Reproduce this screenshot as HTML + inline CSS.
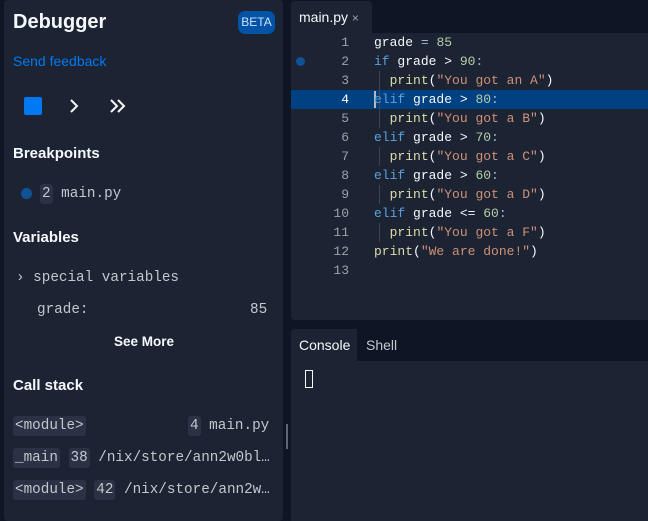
<!DOCTYPE html>
<html><head><style>
*{margin:0;padding:0;box-sizing:border-box}
body{width:648px;height:521px;background:#0e1525;position:relative;overflow:hidden;font-family:"Liberation Sans",sans-serif;color:#f5f9fc}
.a{position:absolute}
.mono{font-family:"Liberation Mono",monospace}
.h{font-weight:bold;font-size:15px}
.chip{background:#2b3245;border-radius:3px;padding:2px 2px}
.ln{position:absolute;left:291px;width:58px;text-align:right;color:#9da2a6;font-size:13px;font-family:"Liberation Mono",monospace}
.cd{position:absolute;left:374px;font-size:13px;white-space:pre;color:#f5f9fc;font-family:"Liberation Mono",monospace}
.k{color:#5ea0dc}.n{color:#b5cea8}.s{color:#ce9178}.f{color:#dcdcaa}.o{color:#a0b8d0}
</style></head><body>
<div class="a" style="left:4px;top:0;width:279px;height:521px;background:#1c2333;border-radius:4px"></div>
<div class="a" style="left:13px;top:11px;font-size:20px;font-weight:bold">Debugger</div>
<div class="a" style="left:238px;top:11px;width:37px;height:23px;background:#0053a6;border-radius:7px;font-size:12px;text-align:center;line-height:23px;color:#cfe3ff">BETA</div>
<div class="a" style="left:13px;top:53px;font-size:14px;color:#0079f2">Send feedback</div>
<div class="a" style="left:24px;top:97px;width:18px;height:18px;background:#0079f2;border-radius:2px"></div>
<svg class="a" style="left:66px;top:97px" width="60" height="18"><path d="M5 3l6 6-6 6" stroke="#f5f9fc" stroke-width="2" fill="none"/><path d="M45 3l6 6-6 6M52 3l6 6-6 6" stroke="#f5f9fc" stroke-width="2" fill="none"/></svg>
<div class="a h" style="left:13px;top:145px">Breakpoints</div>
<div class="a" style="left:21px;top:188px;width:11px;height:11px;border-radius:50%;background:#0f5296"></div>
<div class="a mono" style="left:40px;top:186px;font-size:14.3px;color:#c2c8cc"><span class="chip">2</span> main.py</div>
<div class="a h" style="left:13px;top:229px">Variables</div>
<div class="a mono" style="left:16px;top:270px;font-size:14.3px;color:#c2c8cc">›&nbsp;special variables</div>
<div class="a mono" style="left:37px;top:302px;font-size:14.3px;color:#c2c8cc">grade:</div>
<div class="a mono" style="left:250px;top:302px;font-size:14.3px;color:#c2c8cc">85</div>
<div class="a" style="left:114px;top:334px;font-size:13.5px;font-weight:bold">See More</div>
<div class="a h" style="left:13px;top:377px">Call stack</div>
<div class="a mono" style="left:13px;top:418px;font-size:14.3px;color:#c2c8cc"><span class="chip">&lt;module&gt;</span></div>
<div class="a mono" style="left:188px;top:418px;font-size:14.3px;color:#c2c8cc"><span class="chip">4</span> main.py</div>
<div class="a mono" style="left:13px;top:450px;font-size:14.3px;color:#c2c8cc;white-space:nowrap"><span class="chip">_main</span> <span class="chip">38</span> /nix/store/ann2w0bl…</div>
<div class="a mono" style="left:13px;top:482px;font-size:14.3px;color:#c2c8cc;white-space:nowrap"><span class="chip">&lt;module&gt;</span> <span class="chip">42</span> /nix/store/ann2w…</div>
<div class="a" style="left:286px;top:424px;width:2px;height:25px;background:#5f6775"></div>
<!-- editor -->
<div class="a" style="left:291px;top:0;width:357px;height:320px;background:#1c2333;border-radius:4px 0 0 4px"></div>
<div class="a" style="left:291px;top:0;width:357px;height:33px;background:#0e1525"></div>
<div class="a" style="left:291px;top:1px;width:81px;height:32px;background:#1c2333;border-radius:4px 4px 0 0"></div>
<div class="a" style="left:299px;top:9px;font-size:14px">main.py <span style="color:#9da2a6;font-size:12px">×</span></div>
<div class="a" style="left:291px;top:90px;width:357px;height:19px;background:#004182"></div>
<div class="a" style="left:374px;top:91px;width:2px;height:17px;background:#bbb"></div>
<div class="a" style="left:296px;top:57px;width:9px;height:9px;border-radius:50%;background:#0f5296"></div>
<div class="a" style="left:379px;top:71px;width:1px;height:57px;background:#3d4555"></div>
<div class="a" style="left:379px;top:147px;width:1px;height:19px;background:#3d4555"></div>
<div class="a" style="left:379px;top:185px;width:1px;height:19px;background:#3d4555"></div>
<div class="a" style="left:379px;top:223px;width:1px;height:19px;background:#3d4555"></div>
<div class="ln" style="top:35px">1</div><div class="cd" style="top:35px">grade <span class="o">=</span> <span class="n">85</span></div>
<div class="ln" style="top:54px">2</div><div class="cd" style="top:54px"><span class="k">if</span> grade &gt; <span class="n">90</span><span class="o">:</span></div>
<div class="ln" style="top:73px">3</div><div class="cd" style="top:73px">  <span class="f">print</span>(<span class="s">"You got an A"</span>)</div>
<div class="ln" style="top:92px;color:#fff">4</div><div class="cd" style="top:92px"><span class="k">elif</span> grade &gt; <span class="n">80</span><span class="o">:</span></div>
<div class="ln" style="top:111px">5</div><div class="cd" style="top:111px">  <span class="f">print</span>(<span class="s">"You got a B"</span>)</div>
<div class="ln" style="top:130px">6</div><div class="cd" style="top:130px"><span class="k">elif</span> grade &gt; <span class="n">70</span><span class="o">:</span></div>
<div class="ln" style="top:149px">7</div><div class="cd" style="top:149px">  <span class="f">print</span>(<span class="s">"You got a C"</span>)</div>
<div class="ln" style="top:168px">8</div><div class="cd" style="top:168px"><span class="k">elif</span> grade &gt; <span class="n">60</span><span class="o">:</span></div>
<div class="ln" style="top:187px">9</div><div class="cd" style="top:187px">  <span class="f">print</span>(<span class="s">"You got a D"</span>)</div>
<div class="ln" style="top:206px">10</div><div class="cd" style="top:206px"><span class="k">elif</span> grade &lt;= <span class="n">60</span><span class="o">:</span></div>
<div class="ln" style="top:225px">11</div><div class="cd" style="top:225px">  <span class="f">print</span>(<span class="s">"You got a F"</span>)</div>
<div class="ln" style="top:244px">12</div><div class="cd" style="top:244px"><span class="f">print</span>(<span class="s">"We are done!"</span>)</div>
<div class="ln" style="top:263px">13</div>
<!-- console -->
<div class="a" style="left:291px;top:329px;width:357px;height:192px;background:#1c2333;border-radius:4px 0 0 0"></div>
<div class="a" style="left:357px;top:329px;width:291px;height:32px;background:#0e1525"></div>
<div class="a" style="left:299px;top:337px;font-size:14px">Console</div>
<div class="a" style="left:366px;top:337px;font-size:14px;color:#c2c8cc">Shell</div>
<div class="a" style="left:305px;top:370px;width:8px;height:18px;border:1.5px solid #f5f9fc"></div>
</body></html>
